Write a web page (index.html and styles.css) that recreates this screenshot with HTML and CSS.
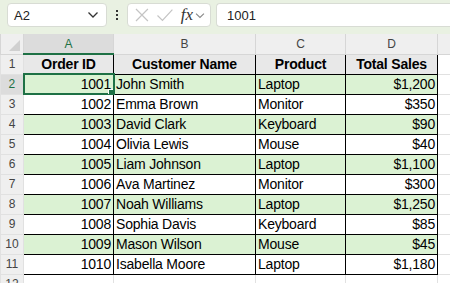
FILE: index.html
```html
<!DOCTYPE html>
<html lang="en">
<head>
    <meta charset="UTF-8">
    <title>Orders</title>
    <link rel="stylesheet" href="styles.css">
</head>
<body>

    <div class="toolbar">
        <div class="namebox">
            <span>A2</span>
            <svg class="chev" width="12" height="8" viewBox="0 0 12 8"><path d="M1.5 1.5 L6 6 L10.5 1.5" fill="none" stroke="#333" stroke-width="1.3"/></svg>
        </div>
        <div class="dots">
            <span></span><span></span><span></span>
        </div>
        <div class="fxbox">
            <svg width="16" height="16" viewBox="0 0 16 16"><path d="M2 2 L14 14 M14 2 L2 14" stroke="#c4c4c4" stroke-width="1.2"/></svg>
            <svg width="18" height="16" viewBox="0 0 18 16"><path d="M1.5 8.5 L6.5 13.5 L16.5 2.5" fill="none" stroke="#c4c4c4" stroke-width="1.2"/></svg>
            <span class="fx">fx</span>
            <svg class="chev" width="10" height="7" viewBox="0 0 10 7"><path d="M1 1.5 L5 5.5 L9 1.5" fill="none" stroke="#888" stroke-width="1.1"/></svg>
        </div>
        <div class="formula">1001</div>
    </div>

    <table class="sheet">
        <colgroup>
            <col style="width:23px">
            <col style="width:90px">
            <col style="width:142px">
            <col style="width:90px">
            <col style="width:92px">
            <col>
        </colgroup>
        <tr class="cols">
            <th class="corner"><span class="tri"></span></th>
            <th class="active">A</th>
            <th>B</th>
            <th>C</th>
            <th>D</th>
            <th></th>
        </tr>
        <tr>
            <th class="rn">1</th>
            <td class="d head">Order ID</td>
            <td class="d head">Customer Name</td>
            <td class="d head">Product</td>
            <td class="d head">Total Sales</td>
            <td></td>
        </tr>
        <tr class="band">
            <th class="rn sel">2</th>
            <td class="d num cur">1001</td>
            <td class="d">John Smith</td>
            <td class="d">Laptop</td>
            <td class="d num">$1,200</td>
            <td class="e"></td>
        </tr>
        <tr>
            <th class="rn">3</th>
            <td class="d num">1002</td>
            <td class="d">Emma Brown</td>
            <td class="d">Monitor</td>
            <td class="d num">$350</td>
            <td class="e"></td>
        </tr>
        <tr class="band">
            <th class="rn">4</th>
            <td class="d num">1003</td>
            <td class="d">David Clark</td>
            <td class="d">Keyboard</td>
            <td class="d num">$90</td>
            <td class="e"></td>
        </tr>
        <tr>
            <th class="rn">5</th>
            <td class="d num">1004</td>
            <td class="d">Olivia Lewis</td>
            <td class="d">Mouse</td>
            <td class="d num">$40</td>
            <td class="e"></td>
        </tr>
        <tr class="band">
            <th class="rn">6</th>
            <td class="d num">1005</td>
            <td class="d">Liam Johnson</td>
            <td class="d">Laptop</td>
            <td class="d num">$1,100</td>
            <td class="e"></td>
        </tr>
        <tr>
            <th class="rn">7</th>
            <td class="d num">1006</td>
            <td class="d">Ava Martinez</td>
            <td class="d">Monitor</td>
            <td class="d num">$300</td>
            <td class="e"></td>
        </tr>
        <tr class="band">
            <th class="rn">8</th>
            <td class="d num">1007</td>
            <td class="d">Noah Williams</td>
            <td class="d">Laptop</td>
            <td class="d num">$1,250</td>
            <td class="e"></td>
        </tr>
        <tr>
            <th class="rn">9</th>
            <td class="d num">1008</td>
            <td class="d">Sophia Davis</td>
            <td class="d">Keyboard</td>
            <td class="d num">$85</td>
            <td class="e"></td>
        </tr>
        <tr class="band">
            <th class="rn">10</th>
            <td class="d num">1009</td>
            <td class="d">Mason Wilson</td>
            <td class="d">Mouse</td>
            <td class="d num">$45</td>
            <td class="e"></td>
        </tr>
        <tr>
            <th class="rn">11</th>
            <td class="d num">1010</td>
            <td class="d">Isabella Moore</td>
            <td class="d">Laptop</td>
            <td class="d num">$1,180</td>
            <td class="e"></td>
        </tr>
        <tr>
            <th class="rn">12</th>
            <td></td><td></td><td></td><td></td><td></td>
        </tr>
    </table>

</body>
</html>
```

FILE: styles.css
```css
*{
    margin: 0;
    padding: 0;
    box-sizing: border-box;
}

body{
    width: 450px;
    height: 283px;
    overflow: hidden;
    background: #fff;
    font-family: "Liberation Sans", Arial, sans-serif;
    color: #000;
}

/* top bar */

.toolbar{
    display: flex;
    align-items: center;
    height: 34px;
    padding: 3px 0 7px 7px;
    background: #e9f1e2;
}

.namebox{
    display: flex;
    align-items: center;
    justify-content: space-between;
    width: 100px;
    height: 24px;
    padding: 0 7px 0 6px;
    background: #fff;
    border: 1px solid #d8dcd4;
    border-radius: 4px;
    font-size: 13px;
    color: #222;
}

.dots{
    display: flex;
    flex-direction: column;
    gap: 2px;
    margin: 0 9px 0 9px;
}

.dots span{
    width: 2px;
    height: 2px;
    background: #333;
}

.fxbox{
    display: flex;
    align-items: center;
    gap: 6px;
    width: 84px;
    height: 24px;
    padding: 0 5px 0 6px;
    background: #fff;
    border: 1px solid #d8dcd4;
    border-radius: 4px;
}

.fx{
    font-family: "Liberation Serif", "Times New Roman", serif;
    font-style: italic;
    font-size: 17px;
    color: #333;
    margin-left: 1px;
}

.fxbox .chev{
    margin-left: -4px;
}

.formula{
    flex: 1;
    height: 24px;
    margin-left: 5px;
    padding: 4px 10px;
    background: #fff;
    border: 1px solid #d8dcd4;
    border-right: none;
    border-radius: 4px 0 0 4px;
    font-size: 13px;
    color: #222;
}

/* grid */

.sheet{
    border-collapse: collapse;
    table-layout: fixed;
    width: 451px;
    font-size: 14px;
    letter-spacing: -0.2px;
}

.sheet td, .sheet th{
    height: 20px;
    border: 1px solid #e1e1e1;
    padding: 0 2px;
    white-space: nowrap;
    overflow: hidden;
}

.cols th{
    background: #efefef;
    font-weight: normal;
    font-size: 12px;
    color: #444;
    border-color: #d6d6d6;
    border-top: none;
    letter-spacing: 0;
}

.cols th.active{
    background: #dcdcdc;
    color: #1e7145;
    border-bottom: 2px solid #1e7145;
}

.corner{
    position: relative;
}

.tri{
    position: absolute;
    right: 3px;
    bottom: 3px;
    width: 0;
    height: 0;
    border-left: 11px solid transparent;
    border-bottom: 11px solid #d0d0d0;
}

.rn{
    background: #efefef;
    font-weight: normal;
    font-size: 12px;
    color: #444;
    text-align: center;
    border-color: #d6d6d6;
    border-left: none;
    letter-spacing: 0;
}

.rn.sel{
    background: #dcdcdc;
    color: #1e7145;
    border-right: 2px solid #1e7145;
}

.sheet td.d{
    border: 1px solid #000;
}

.head{
    background: #e8e8e8;
    font-weight: bold;
    text-align: center;
}

.band td.d{
    background: #dbf2d3;
}

.num{
    text-align: right;
}

.cur{
    position: relative;
    outline: 2px solid #1e7145;
    outline-offset: -1px;
}

.cur::after{
    content: "";
    position: absolute;
    right: -3px;
    bottom: -3px;
    width: 6px;
    height: 6px;
    background: #1e7145;
    border: 1px solid #fff;
}
```
